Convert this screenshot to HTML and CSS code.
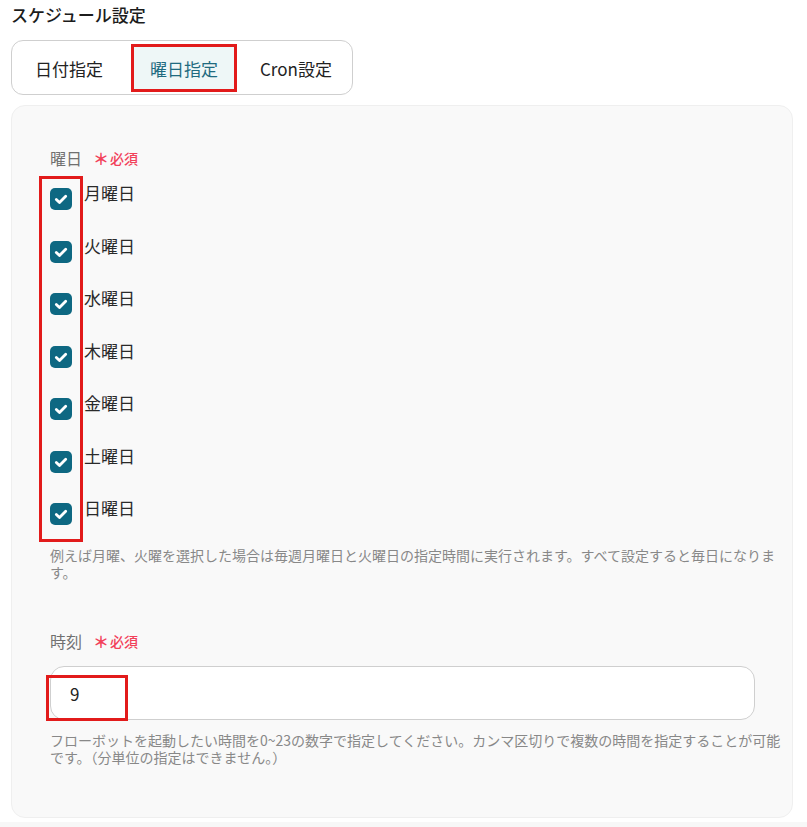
FILE: index.html
```html
<!DOCTYPE html>
<html lang="ja">
<head>
<meta charset="utf-8">
<title>スケジュール設定</title>
<link rel="stylesheet" href="styles.css">
</head>
<body>
<div class="page">
  <div class="title">スケジュール設定</div>
  <div class="tabs">
    <div class="tab">日付指定</div>
    <div class="tab active">曜日指定</div>
    <div class="tab">Cron設定</div>
  </div>
  <div class="panel">
    <div class="field-label">曜日<span class="req"><span class="ast">＊</span>必須</span></div>
    <div class="days">
      <label class="day"><span class="cb"><svg viewBox="0 0 22 22" width="22" height="22"><path d="M6.3 11.4l3.2 3.1 6.2-6.3" fill="none" stroke="#fff" stroke-width="2.8" stroke-linecap="round" stroke-linejoin="round"/></svg></span><span class="day-text">月曜日</span></label>
      <label class="day"><span class="cb"><svg viewBox="0 0 22 22" width="22" height="22"><path d="M6.3 11.4l3.2 3.1 6.2-6.3" fill="none" stroke="#fff" stroke-width="2.8" stroke-linecap="round" stroke-linejoin="round"/></svg></span><span class="day-text">火曜日</span></label>
      <label class="day"><span class="cb"><svg viewBox="0 0 22 22" width="22" height="22"><path d="M6.3 11.4l3.2 3.1 6.2-6.3" fill="none" stroke="#fff" stroke-width="2.8" stroke-linecap="round" stroke-linejoin="round"/></svg></span><span class="day-text">水曜日</span></label>
      <label class="day"><span class="cb"><svg viewBox="0 0 22 22" width="22" height="22"><path d="M6.3 11.4l3.2 3.1 6.2-6.3" fill="none" stroke="#fff" stroke-width="2.8" stroke-linecap="round" stroke-linejoin="round"/></svg></span><span class="day-text">木曜日</span></label>
      <label class="day"><span class="cb"><svg viewBox="0 0 22 22" width="22" height="22"><path d="M6.3 11.4l3.2 3.1 6.2-6.3" fill="none" stroke="#fff" stroke-width="2.8" stroke-linecap="round" stroke-linejoin="round"/></svg></span><span class="day-text">金曜日</span></label>
      <label class="day"><span class="cb"><svg viewBox="0 0 22 22" width="22" height="22"><path d="M6.3 11.4l3.2 3.1 6.2-6.3" fill="none" stroke="#fff" stroke-width="2.8" stroke-linecap="round" stroke-linejoin="round"/></svg></span><span class="day-text">土曜日</span></label>
      <label class="day"><span class="cb"><svg viewBox="0 0 22 22" width="22" height="22"><path d="M6.3 11.4l3.2 3.1 6.2-6.3" fill="none" stroke="#fff" stroke-width="2.8" stroke-linecap="round" stroke-linejoin="round"/></svg></span><span class="day-text">日曜日</span></label>
    </div>
    <p class="help help-days">例えば月曜、火曜を選択した場合は毎週月曜日と火曜日の指定時間に実行されます。すべて設定すると毎日になります。</p>
    <div class="field-label label-time">時刻<span class="req"><span class="ast">＊</span>必須</span></div>
    <div class="input-wrap">
      <div class="input"><span class="value">9</span></div>
    </div>
    <p class="help help-time">フローボットを起動したい時間を0~23の数字で指定してください。カンマ区切りで複数の時間を指定することが可能です。（分単位の指定はできません。）</p>
  </div>
  <div class="strip"></div>
</div>
</body>
</html>
```
FILE: styles.css
```css
* { box-sizing: border-box; }
html, body { margin: 0; padding: 0; background: #fff; }
body {
  font-family: "Noto Sans CJK JP", "Noto Sans", sans-serif;
  color: #222;
}
.page {
  padding: 3px 14px 0 11px;
}
.title {
  font-size: 17px;
  line-height: 24px;
  font-weight: 500;
  color: #1c1c1c;
}
.tabs {
  display: inline-flex;
  gap: 10px;
  margin-top: 13px;
  padding: 5px 3px 4px 6px;
  border: 1px solid #cfcfcf;
  border-radius: 12px;
  background: #fff;
}
.tab {
  height: 44px;
  padding: 0 17px;
  display: flex;
  align-items: center;
  font-size: 17px;
  color: #222;
}
.tab.active {
  margin: 0 -2px 0 3px;
  background: #eef7f7;
  color: #1f6b80;
  outline: 3px solid #e21b1b;
  outline-offset: -1px;
}
.panel {
  margin-top: 10px;
  background: #f9f9f9;
  border: 1px solid #efefef;
  border-radius: 14px;
  padding: 40px 9px 52px 38px;
}
.field-label {
  font-size: 16px;
  line-height: 24px;
  color: #707070;
  display: flex;
  align-items: center;
}
.req {
  margin-left: 11px;
  font-size: 14px;
  color: #f2415a;
  font-weight: 500;
  display: flex;
  align-items: center;
}
.ast {
  font-size: 16px;
  font-weight: 700;
  margin-right: 1px;
}
.days {
  position: relative;
  margin-top: 11px;
  display: flex;
  flex-direction: column;
  gap: 23.5px;
}
.days::before {
  content: "";
  position: absolute;
  left: -11px;
  top: -5px;
  width: 38px;
  height: 360px;
  border: 3px solid #e21b1b;
  pointer-events: none;
}
.day {
  display: flex;
  align-items: flex-start;
  gap: 12px;
  min-height: 29px;
}
.cb {
  margin-top: 7px;
  width: 22px;
  height: 22px;
  border-radius: 5px;
  background: #0e6882;
  display: block;
  flex: none;
}
.cb svg { display: block; }
.day-text {
  font-size: 17px;
  line-height: 24px;
  color: #2a2a2a;
}
.help {
  margin: 0;
  font-size: 14px;
  line-height: 16.5px;
  color: #888;
}
.help-days { margin-top: 22px; }
.label-time { margin-top: 49px; }
.input-wrap {
  position: relative;
  margin-top: 13px;
  width: 705px;
}
.input {
  height: 54px;
  background: #fff;
  border: 1px solid #cfcfcf;
  border-radius: 14px;
  padding-left: 19px;
  display: flex;
  align-items: center;
  font-size: 17px;
  color: #222;
}
.input-wrap::after {
  content: "";
  position: absolute;
  left: -4px;
  top: 9px;
  width: 76px;
  height: 40px;
  border: 3px solid #e21b1b;
  pointer-events: none;
}
.help-time { margin-top: 12px; }
.strip {
  margin: 4px -14px 0 -11px;
  height: 12px;
  background: #f7f7f7;
}
```
